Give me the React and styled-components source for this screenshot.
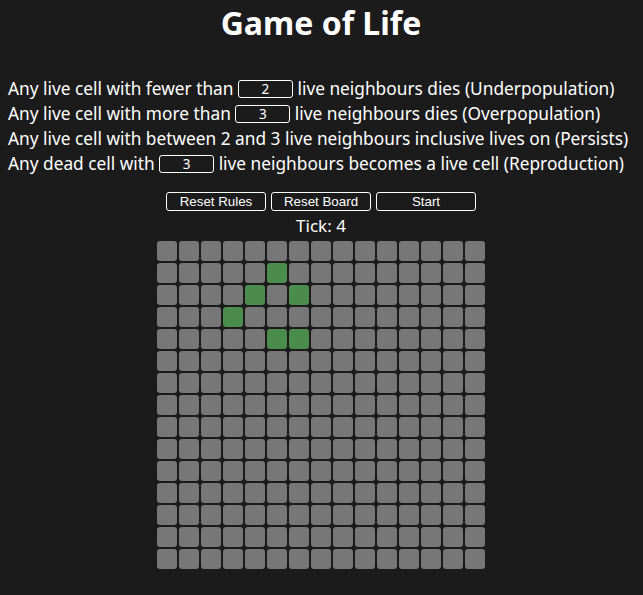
import React, { useState } from "react"
import styled, { createGlobalStyle } from "styled-components"

const GlobalStyle = createGlobalStyle`
  body {
    margin: 0;
    background: #1c1b1c;
    color: #ffffff;
    font-family: "Noto Sans", "Open Sans", sans-serif;
  }
`

const SIZE = 15
const LIVE = [
  [1, 5],
  [2, 4],
  [2, 6],
  [3, 3],
  [4, 5],
  [4, 6],
]

const App = () => {
  const [under, setUnder] = useState("2")
  const [over, setOver] = useState("3")
  const [birth, setBirth] = useState("3")

  const alive = new Set(LIVE.map(([r, c]) => r * SIZE + c))
  const cells = Array.from({ length: SIZE * SIZE }, (_, i) => alive.has(i))

  return (
    <Page>
      <GlobalStyle />
      <Title>Game of Life</Title>
      <Rules>
        <Rule>
          Any live cell with fewer than{" "}
          <RuleInput value={under} onChange={e => setUnder(e.target.value)} />{" "}
          live neighbours dies (Underpopulation)
        </Rule>
        <Rule>
          Any live cell with more than{" "}
          <RuleInput value={over} onChange={e => setOver(e.target.value)} />{" "}
          live neighbours dies (Overpopulation)
        </Rule>
        <Rule>
          Any live cell with between 2 and 3 live neighbours inclusive lives on (Persists)
        </Rule>
        <Rule>
          Any dead cell with{" "}
          <RuleInput value={birth} onChange={e => setBirth(e.target.value)} />{" "}
          live neighbours becomes a live cell (Reproduction)
        </Rule>
      </Rules>
      <Controls>
        <ControlButton>Reset Rules</ControlButton>
        <ControlButton>Reset Board</ControlButton>
        <ControlButton>Start</ControlButton>
      </Controls>
      <Tick>Tick: 4</Tick>
      <Board>
        {cells.map((live, i) => (
          <Cell key={i} live={live} />
        ))}
      </Board>
    </Page>
  )
}

export default App

const Page = styled.div`
  padding: 0 9px 20px 8px;
  display: flex;
  flex-direction: column;
  align-items: center;
`

const Title = styled.h1`
  margin: 4px 0 34px;
  font-size: 32px;
  font-weight: 700;
  line-height: 38px;
`

const Rules = styled.div`
  align-self: stretch;
  display: flex;
  flex-direction: column;
  margin-bottom: 16px;
`

const Rule = styled.div`
  font-size: 17.3px;
  line-height: 25px;
  white-space: nowrap;
`

const RuleInput = styled.input`
  width: 55px;
  height: 18px;
  box-sizing: border-box;
  background: transparent;
  border: 1px solid #ffffff;
  border-radius: 3px;
  color: #ffffff;
  text-align: center;
  font-family: "Noto Sans", "Open Sans", sans-serif;
  font-size: 13.5px;
  line-height: 16px;
  padding: 0;
  vertical-align: 1px;
  outline: none;
`

const Controls = styled.div`
  display: flex;
  gap: 5px;
`

const ControlButton = styled.button`
  width: 100px;
  height: 19px;
  box-sizing: border-box;
  background: transparent;
  border: 1px solid #ffffff;
  border-radius: 3px;
  color: #ffffff;
  font-family: "Liberation Sans", Arial, sans-serif;
  font-size: 13.33px;
  padding: 0;
  cursor: pointer;
`

const Tick = styled.div`
  font-size: 17px;
  line-height: 23px;
  margin: 3px 0 4px;
`

const Board = styled.div`
  display: grid;
  grid-template-columns: repeat(${SIZE}, 20px);
  grid-auto-rows: 20px;
  gap: 2px;
`

const Cell = styled.div`
  border-radius: 3px;
  background: ${props => (props.live ? "#4b8b4b" : "#777777")};
`
